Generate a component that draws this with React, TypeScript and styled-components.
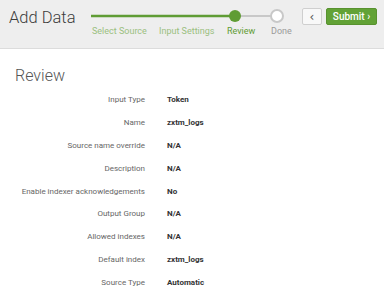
import styled, { createGlobalStyle } from 'styled-components';

const GlobalStyle = createGlobalStyle`
  html, body {
    margin: 0;
    padding: 0;
    background: #fff;
    font-family: Roboto, "Liberation Sans", Arial, sans-serif;
  }
`;

const rows: [string, string][] = [
  ['Input Type', 'Token'],
  ['Name', 'zxtm_logs'],
  ['Source name override', 'N/A'],
  ['Description', 'N/A'],
  ['Enable indexer acknowledgements', 'No'],
  ['Output Group', 'N/A'],
  ['Allowed indexes', 'N/A'],
  ['Default index', 'zxtm_logs'],
  ['Source Type', 'Automatic'],
];

const steps = [
  { label: 'Select Source', state: 'done', width: 66 },
  { label: 'Input Settings', state: 'done', width: 67 },
  { label: 'Review', state: 'current', width: 43 },
  { label: 'Done', state: 'todo', width: 20 },
];

const App = () => {
  return (
    <Page>
      <GlobalStyle />
      <Header>
        <Title>Add Data</Title>
        <Stepper>
          <svg width="194" height="16" viewBox="0 0 194 16">
            <line x1="0" y1="8" x2="144" y2="8" stroke="#5f9c34" strokeWidth="2.5" />
            <line x1="144" y1="8" x2="180" y2="8" stroke="#c8c8c8" strokeWidth="2" />
            <circle cx="144" cy="8" r="6" fill="#5f9c34" />
            <circle cx="186" cy="8" r="6" fill="#fff" stroke="#c8c8c8" strokeWidth="2" />
          </svg>
          <StepLabels>
            {steps.map((s) => (
              <StepLabel key={s.label} state={s.state} style={{ width: s.width }}>
                {s.label}
              </StepLabel>
            ))}
          </StepLabels>
        </Stepper>
        <Buttons>
          <BackButton>&lsaquo;</BackButton>
          <SubmitButton>Submit &rsaquo;</SubmitButton>
        </Buttons>
      </Header>
      <Content>
        <SectionTitle>Review</SectionTitle>
        <Table>
          {rows.map(([label, value]) => (
            <Row key={label}>
              <Label>{label}</Label>
              <Value>{value}</Value>
            </Row>
          ))}
        </Table>
      </Content>
    </Page>
  );
};

const Page = styled.div`
  width: 384px;
  height: 298px;
  overflow: hidden;
`;

const Header = styled.div`
  height: 48px;
  background: #eeeeee;
  border-bottom: 1px solid #dcdcdc;
  display: flex;
  align-items: flex-start;
  padding: 0 0 0 9px;
  box-sizing: content-box;
`;

const Title = styled.h1`
  margin: 8px 0 0;
  font-size: 16.5px;
  font-weight: 300;
  color: #3c3c3c;
  width: 82px;
  flex-shrink: 0;
  white-space: nowrap;
`;

const Stepper = styled.div`
  margin-top: 8px;
  display: flex;
  flex-direction: column;
  flex-shrink: 0;
  svg {
    display: block;
  }
`;

const StepLabels = styled.div`
  display: flex;
  margin-top: 2px;
`;

const StepLabel = styled.div<{ state: string }>`
  font-size: 9px;
  white-space: nowrap;
  padding-left: 1px;
  color: ${(p) =>
    p.state === 'done' ? '#9bbf80' : p.state === 'current' ? '#5f9c34' : '#9a9a9a'};
`;

const Buttons = styled.div`
  margin: 8px 0 0 auto;
  padding-right: 7px;
  display: flex;
  gap: 4px;
`;

const BackButton = styled.button`
  width: 20px;
  height: 17px;
  padding: 0;
  border: 1px solid #cfcfcf;
  border-radius: 2px;
  background: #f8f8f8;
  color: #555;
  font-family: "DejaVu Sans", sans-serif;
  font-size: 12px;
  line-height: 14px;
`;

const SubmitButton = styled.button`
  width: 51px;
  height: 17px;
  padding: 0;
  border: 1px solid #58922f;
  border-radius: 2px;
  background: #62a236;
  color: #fff;
  font-family: Roboto, "Liberation Sans", Arial, sans-serif;
  font-size: 10px;
  font-weight: 500;
`;

const Content = styled.div`
  padding: 17px 0 0 15px;
`;

const SectionTitle = styled.h2`
  margin: 0 0 3px;
  font-size: 16px;
  font-weight: 300;
  color: #555;
`;

const Table = styled.div`
  display: flex;
  flex-direction: column;
`;

const Row = styled.div`
  display: flex;
  height: 22.9px;
  align-items: center;
  font-size: 8px;
`;

const Label = styled.div`
  width: 130px;
  text-align: right;
  color: #666;
`;

const Value = styled.div`
  margin-left: 22px;
  font-weight: 700;
  color: #333;
`;

export default App;
